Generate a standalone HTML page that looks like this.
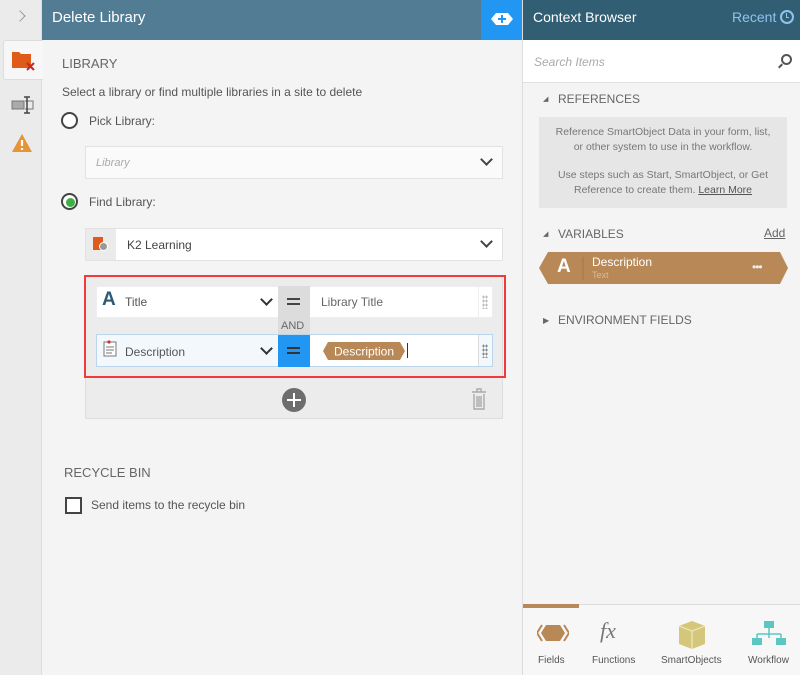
<!DOCTYPE html>
<html><head><style>
*{box-sizing:border-box;margin:0;padding:0}
body{width:800px;height:675px;overflow:hidden;font-family:"Liberation Sans",sans-serif;background:#f4f4f4;position:relative;font-size:12px;color:#555}
.a{position:absolute}
.sel{background:#fff;border:1px solid #e2e2e2}
.chev{position:absolute;width:9px;height:9px;border-right:2px solid #444;border-bottom:2px solid #444;transform:rotate(45deg)}
.radio{position:absolute;width:17px;height:17px;border:2px solid #444;border-radius:50%;background:#fff}
.dots{position:absolute;width:6px;height:14px;background-image:radial-gradient(#bbb 1px,transparent 1.2px);background-size:3px 4px}
</style></head><body>
<!-- left strip -->
<div class="a" style="left:0;top:0;width:42px;height:675px;background:#ebebeb;border-right:1px solid #ddd"></div>
<div class="a" style="left:16px;top:12px;width:8px;height:8px;border-right:1.5px solid #999;border-top:1.5px solid #999;transform:rotate(45deg)"></div>
<div class="a" style="left:3px;top:40px;width:40px;height:40px;background:#f7f7f7;border:1px solid #ddd;border-right:none;border-radius:3px 0 0 3px"></div>
<svg class="a" style="left:11px;top:49px" width="26" height="24"><path d="M1 3h7l2 2h10v14H1z" fill="#e05a1a"/><path d="M16 14l7 7M23 14l-7 7" stroke="#c62828" stroke-width="2"/></svg>
<svg class="a" style="left:11px;top:96px" width="24" height="18"><rect x="1" y="5" width="12" height="8" fill="#aaa" stroke="#777"/><path d="M14 5h8v8h-8" fill="none" stroke="#777"/><path d="M16 1v16M13 1h6M13 17h6" stroke="#444" stroke-width="1.5"/></svg>
<svg class="a" style="left:11px;top:133px" width="22" height="20"><path d="M11 1L21 19H1z" fill="#e59436"/><path d="M11 7v6M11 15v2" stroke="#fff" stroke-width="2.2"/></svg>

<!-- main header -->
<div class="a" style="left:42px;top:0;width:439px;height:40px;background:#527c94"></div>
<div class="a" style="left:52px;top:9px;color:#fff;font-size:15px">Delete Library</div>
<div class="a" style="left:481px;top:0;width:42px;height:40px;background:#2196f3"></div>
<svg class="a" style="left:490px;top:10px" width="24" height="18"><path d="M6 3h12l5 6-5 6H6L1 9z" fill="#fff"/><path d="M12 5v8M8 9h8" stroke="#2196f3" stroke-width="2"/></svg>

<div class="a" style="left:62px;top:56px;font-size:13px;color:#666">LIBRARY</div>
<div class="a" style="left:62px;top:85px;font-size:12px;color:#555">Select a library or find multiple libraries in a site to delete</div>
<div class="radio" style="left:61px;top:112px"></div>
<div class="a" style="left:89px;top:114px;color:#555">Pick Library:</div>
<div class="a sel" style="left:85px;top:146px;width:418px;height:33px;background:#fafafa"></div>
<div class="a" style="left:96px;top:157px;font-size:11px;font-style:italic;color:#aaa">Library</div>
<div class="chev" style="left:482px;top:155px"></div>
<div class="radio" style="left:61px;top:193px"></div>
<div class="a" style="left:66px;top:198px;width:9px;height:9px;border-radius:50%;background:#3cb043"></div>
<div class="a" style="left:89px;top:195px;color:#555">Find Library:</div>
<div class="a sel" style="left:85px;top:228px;width:418px;height:33px"></div>
<div class="a" style="left:86px;top:229px;width:30px;height:31px;background:#ebebeb"></div>
<div class="a" style="left:93px;top:237px;width:10px;height:13px;background:#e05a1a"></div>
<div class="a" style="left:99px;top:242px;width:9px;height:9px;border-radius:50%;background:#999;border:1px solid #fff"></div>
<div class="a" style="left:127px;top:238px;color:#444">K2 Learning</div>
<div class="chev" style="left:482px;top:237px"></div>

<!-- filter box -->
<div class="a" style="left:85px;top:275px;width:418px;height:144px;background:#ececec;border:1px solid #ddd"></div>
<div class="a" style="left:84px;top:275px;width:422px;height:103px;border:2px solid #f23a3a"></div>
<div class="a sel" style="left:96px;top:286px;width:397px;height:32px;border-color:#eee"></div>
<div class="a" style="left:102px;top:289px;font-size:19px;font-weight:bold;color:#2e5a75">A</div>
<div class="a" style="left:125px;top:295px;color:#555">Title</div>
<div class="chev" style="left:262px;top:295px;border-color:#333"></div>
<div class="a" style="left:278px;top:286px;width:32px;height:49px;background:#dcdcdc"></div>
<div class="a" style="left:287px;top:298px;width:13px;height:7px;border-top:2px solid #444;border-bottom:2px solid #444"></div>
<div class="a" style="left:281px;top:320px;font-size:11px;color:#666">AND</div>
<div class="a" style="left:321px;top:295px;color:#666">Library Title</div>
<div class="a" style="left:478px;top:287px;width:1px;height:30px;background:#eee"></div>
<div class="dots" style="left:482px;top:295px"></div>
<div class="a" style="left:96px;top:334px;width:397px;height:33px;background:#f3f8fd;border:1px solid #b9d6ee"></div>
<div class="a" style="left:310px;top:335px;width:168px;height:31px;background:#fff"></div>
<svg class="a" style="left:103px;top:340px" width="16" height="18"><rect x="1" y="2" width="12" height="14" fill="#fff" stroke="#777"/><path d="M3 7h8M3 10h8M3 13h6" stroke="#777"/><circle cx="6" cy="2" r="1.6" fill="#d32f2f"/></svg>
<div class="a" style="left:125px;top:345px;color:#555">Description</div>
<div class="chev" style="left:262px;top:344px;border-color:#333"></div>
<div class="a" style="left:278px;top:335px;width:32px;height:32px;background:#2196f3"></div>
<div class="a" style="left:287px;top:347px;width:13px;height:7px;border-top:2px solid #333;border-bottom:2px solid #333"></div>
<svg class="a" style="left:322px;top:341px" width="84" height="20"><path d="M6 1h72l5 9-5 9H6L1 10z" fill="#b88856"/><text x="42" y="14.5" text-anchor="middle" font-family="Liberation Sans" font-size="12" fill="#fff">Description</text></svg>
<div class="a" style="left:407px;top:343px;width:1px;height:15px;background:#333"></div>
<div class="a" style="left:478px;top:335px;width:1px;height:31px;background:#ddd"></div>
<div class="dots" style="left:482px;top:344px;background-image:radial-gradient(#888 1px,transparent 1.2px)"></div>
<div class="a" style="left:282px;top:388px;width:24px;height:24px;border-radius:50%;background:#6d6d6d"></div>
<div class="a" style="left:293px;top:393px;width:2px;height:14px;background:#fff"></div>
<div class="a" style="left:287px;top:399px;width:14px;height:2px;background:#fff"></div>
<svg class="a" style="left:470px;top:387px" width="18" height="24"><path d="M2 5h14M7 5V2h4v3M4 7v15h10V7M7 9v11M9 9v11M11 9v11" fill="none" stroke="#aaa" stroke-width="1.4"/></svg>

<div class="a" style="left:64px;top:465px;font-size:13px;color:#666">RECYCLE BIN</div>
<div class="a" style="left:65px;top:497px;width:17px;height:17px;border:2px solid #444;background:#fff"></div>
<div class="a" style="left:91px;top:498px;color:#555">Send items to the recycle bin</div>

<!-- right panel -->
<div class="a" style="left:522px;top:0;width:1px;height:675px;background:#ddd"></div>
<div class="a" style="left:523px;top:0;width:277px;height:40px;background:#325e74"></div>
<div class="a" style="left:533px;top:9px;color:#fff;font-size:14px">Context Browser</div>
<div class="a" style="left:732px;top:9px;color:#8fc4ef;font-size:14px">Recent</div>
<div class="a" style="left:780px;top:10px;width:14px;height:14px;border:2px solid #8fc4ef;border-radius:50%"></div>
<div class="a" style="left:786px;top:13px;width:3px;height:5px;border-left:1.5px solid #8fc4ef;border-bottom:1.5px solid #8fc4ef"></div>
<div class="a" style="left:523px;top:40px;width:277px;height:43px;background:#fff;border-bottom:1px solid #e0e0e0"></div>
<div class="a" style="left:534px;top:55px;font-size:12px;font-style:italic;color:#aaa">Search Items</div>
<div class="a" style="left:781px;top:54px;width:11px;height:11px;border:2px solid #555;border-radius:50%"></div>
<div class="a" style="left:778px;top:65px;width:5px;height:2px;background:#555;transform:rotate(-45deg)"></div>
<div class="a" style="left:543px;top:95px;font-size:7px;color:#666">◢</div>
<div class="a" style="left:558px;top:92px;color:#666">REFERENCES</div>
<div class="a" style="left:539px;top:117px;width:248px;height:91px;background:#e6e6e6;text-align:center;font-size:10.5px;color:#777;line-height:15px;padding-top:8px">Reference SmartObject Data in your form, list,<br>or other system to use in the workflow.<br><div style="height:13px"></div>Use steps such as Start, SmartObject, or Get<br>Reference to create them. <u style="color:#555">Learn More</u></div>
<div class="a" style="left:543px;top:230px;font-size:7px;color:#666">◢</div>
<div class="a" style="left:558px;top:227px;color:#666">VARIABLES</div>
<div class="a" style="left:764px;top:226px;color:#666;text-decoration:underline">Add</div>
<svg class="a" style="left:539px;top:252px" width="250" height="33"><path d="M9 0h232l8 16-8 16H9L0 16z" fill="#b88856"/><line x1="44" y1="5" x2="44" y2="28" stroke="#a67646"/></svg>
<div class="a" style="left:557px;top:256px;color:#fff;font-size:19px;font-weight:bold">A</div>
<div class="a" style="left:592px;top:255px;color:#fff;font-size:12px">Description</div>
<div class="a" style="left:592px;top:270px;color:#d8bd97;font-size:9px">Text</div>
<div class="a" style="left:752px;top:260px;color:#eee;font-size:12px;letter-spacing:-1px">•••</div>
<div class="a" style="left:543px;top:316px;font-size:8px;color:#666">▶</div>
<div class="a" style="left:558px;top:313px;color:#666">ENVIRONMENT FIELDS</div>

<div class="a" style="left:523px;top:604px;width:277px;height:71px;background:#f7f7f7;border-top:1px solid #ddd"></div>
<div class="a" style="left:523px;top:604px;width:56px;height:4px;background:#b88856"></div>
<svg class="a" style="left:537px;top:623px" width="32" height="20"><path d="M9 2h14l5 8-5 8H9L4 10z" fill="#b88856"/><path d="M5 2L0 10l5 8" fill="none" stroke="#b88856" stroke-width="2"/><path d="M27 2l5 8-5 8" fill="none" stroke="#b88856" stroke-width="2"/></svg>
<div class="a" style="left:538px;top:655px;font-size:10px;color:#555">Fields</div>
<div class="a" style="left:600px;top:618px;font-size:22px;font-style:italic;font-family:'Liberation Serif',serif;color:#777">fx</div>
<div class="a" style="left:592px;top:655px;font-size:10px;color:#555">Functions</div>
<svg class="a" style="left:677px;top:620px" width="30" height="30"><path d="M15 1l13 5v18l-13 5-13-5V6z" fill="#d4c77c"/><path d="M2 6l13 5 13-5M15 11v18" stroke="#f0e8b8" stroke-width="1.2" fill="none"/></svg>
<div class="a" style="left:661px;top:655px;font-size:10px;color:#555">SmartObjects</div>
<svg class="a" style="left:752px;top:620px" width="34" height="30"><rect x="12" y="1" width="10" height="7" fill="#5cc6c0"/><path d="M17 8v6M5 14h24M5 14v4M29 14v4M17 14v4" stroke="#5cc6c0" stroke-width="1.5" fill="none"/><rect x="0" y="18" width="10" height="7" fill="#5cc6c0"/><rect x="24" y="18" width="10" height="7" fill="#5cc6c0"/></svg>
<div class="a" style="left:748px;top:655px;font-size:10px;color:#555">Workflow</div>
</body></html>
